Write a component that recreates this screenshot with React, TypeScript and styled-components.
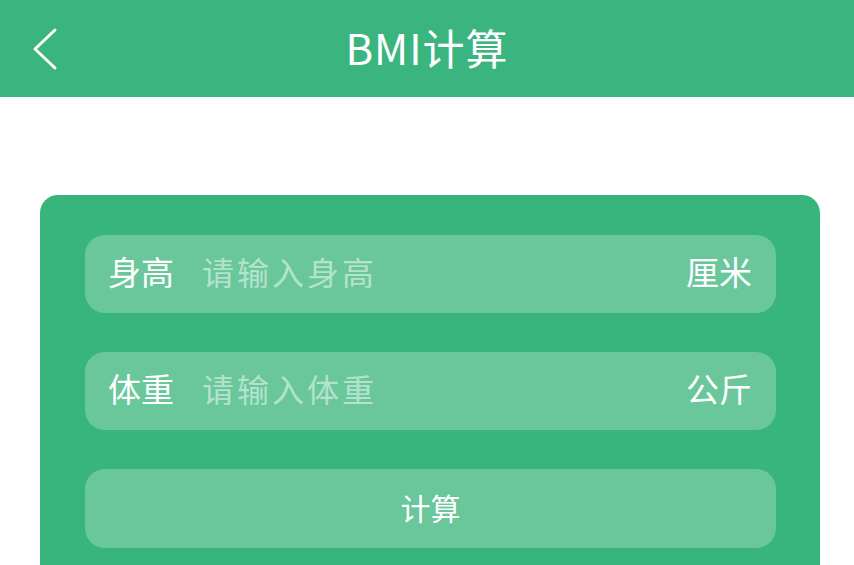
import styled, {createGlobalStyle} from "styled-components";

const GlobalStyle = createGlobalStyle`
    html, body {
        margin: 0;
        padding: 0;
        background: #ffffff;
        font-family: "Noto Sans CJK SC", "Noto Sans", sans-serif;
    }
`;

type FieldProps = {
    label: string;
    placeholder: string;
    unit: string;
};

function Field({label, placeholder, unit}: FieldProps) {
    return (
        <FieldRow>
            <FieldLabel>{label}</FieldLabel>
            <FieldInput type="text" placeholder={placeholder}/>
            <FieldUnit>{unit}</FieldUnit>
        </FieldRow>
    );
}

export default function App() {
    return (
        <>
            <GlobalStyle/>
            <Page>
                <Header>
                    <BackButton aria-label="返回">
                        <svg width="30" height="44" viewBox="0 0 30 44" fill="none">
                            <path d="M25 3 L5 22 L25 41" stroke="#ffffff" strokeWidth="3" strokeLinecap="round"
                                  strokeLinejoin="round"/>
                        </svg>
                    </BackButton>
                    <Title>BMI计算</Title>
                </Header>
                <Content>
                    <Card>
                        <Field label="身高" placeholder="请输入身高" unit="厘米"/>
                        <Field label="体重" placeholder="请输入体重" unit="公斤"/>
                        <CalcButton>计算</CalcButton>
                    </Card>
                </Content>
            </Page>
        </>
    );
}

const Page = styled.div`
    width: 854px;
    height: 565px;
    overflow: hidden;
    display: flex;
    flex-direction: column;
`;

const Header = styled.header`
    position: relative;
    height: 97px;
    background-color: #3bb57f;
    display: flex;
    align-items: center;
    justify-content: center;
    flex-shrink: 0;
`;

const BackButton = styled.button`
    position: absolute;
    left: 30px;
    top: 27px;
    padding: 0;
    border: none;
    background: transparent;
    display: flex;
    cursor: pointer;
`;

const Title = styled.h1`
    margin: 0 0 4px;
    color: #ffffff;
    font-size: 42px;
    font-weight: 400;
    letter-spacing: 1px;
`;

const Content = styled.main`
    padding: 98px 34px 0 40px;
`;

const Card = styled.section`
    background-color: #38b57b;
    border-radius: 18px;
    padding: 40px 44px 40px 45px;
    display: flex;
    flex-direction: column;
    gap: 39px;
`;

const FieldRow = styled.label`
    height: 78px;
    box-sizing: border-box;
    border-radius: 20px;
    background-color: rgba(255, 255, 255, 0.25);
    display: flex;
    align-items: center;
    padding: 0 24px 6px 23px;
    color: #ffffff;
    font-size: 33px;
`;

const FieldLabel = styled.span`
    font-weight: 400;
    margin-right: 28px;
    white-space: nowrap;
`;

const FieldInput = styled.input`
    flex: 1;
    min-width: 0;
    border: none;
    outline: none;
    background: transparent;
    padding: 0;
    color: #ffffff;
    font-family: inherit;
    font-size: 32px;
    letter-spacing: 3px;

    &::placeholder {
        color: rgba(255, 255, 255, 0.5);
    }
`;

const FieldUnit = styled.span`
    white-space: nowrap;
`;

const CalcButton = styled.button`
    height: 79px;
    border: none;
    border-radius: 20px;
    background-color: rgba(255, 255, 255, 0.25);
    color: #ffffff;
    font-family: inherit;
    font-size: 30px;
    padding: 0 0 4px;
    cursor: pointer;
`;
